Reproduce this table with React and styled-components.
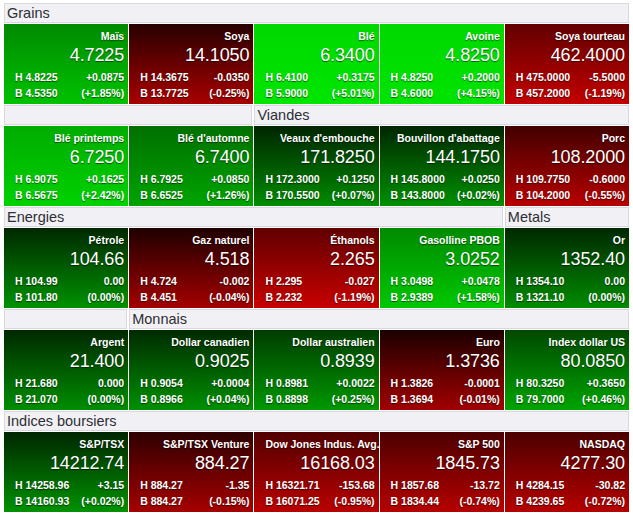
import React from "react";
import styled, { createGlobalStyle } from "styled-components";

const Global = createGlobalStyle`
  html, body { margin: 0; padding: 0; background: #ffffff; }
  body { font-family: "Liberation Sans", Arial, Helvetica, sans-serif; }
`;

const Board = styled.div`
  display: grid;
  grid-template-columns: repeat(5, 1fr);
  column-gap: 1px;
  row-gap: 1px;
  width: 625px;
  margin: 3px 0 0 4px;
`;

const SectionHeader = styled.div`
  grid-column: span ${(p) => p.$span};
  height: 18px;
  box-sizing: content-box;
  border: 1px solid #d8d8de;
  background: #f1f1f5;
  color: #2e2e33;
  font-size: 14.5px;
  line-height: 18px;
  padding-left: 2px;
  margin-right: ${(p) => (p.$last ? 0 : 1)}px;
  white-space: nowrap;
`;

const Tile = styled.div`
  height: 80px;
  box-sizing: border-box;
  padding: 5px 4px 0 11px;
  background: linear-gradient(to bottom, ${(p) => p.$from}, ${(p) => p.$to});
  color: #ffffff;
  text-shadow: 0 1px 1px rgba(0, 0, 0, 0.55);
  display: flex;
  flex-direction: column;
  overflow: hidden;
`;

const Name = styled.div`
  font-size: 10.5px;
  font-weight: bold;
  line-height: 14px;
  text-align: right;
  white-space: nowrap;
`;

const Price = styled.div`
  font-size: 18px;
  line-height: 24px;
  text-align: right;
  letter-spacing: -0.1px;
`;

const Stats = styled.div`
  margin-top: 3px;
  display: grid;
  grid-template-columns: 1fr auto;
  font-size: 10.5px;
  font-weight: bold;
  line-height: 15.5px;
  white-space: nowrap;
`;

const StatRight = styled.span`
  text-align: right;
`;

const sections = [
  {
    headers: [{ label: "Grains", span: 5 }],
    tiles: [
      ["Maïs", "4.7225", "4.8225", "4.5350", "+0.0875", "(+1.85%)", "#008a00", "#00c200"],
      ["Soya", "14.1050", "14.3675", "13.7725", "-0.0350", "(-0.25%)", "#280000", "#a80000"],
      ["Blé", "6.3400", "6.4100", "5.9000", "+0.3175", "(+5.01%)", "#00d800", "#00e600"],
      ["Avoine", "4.8250", "4.8250", "4.6000", "+0.2000", "(+4.15%)", "#00d800", "#00e400"],
      ["Soya tourteau", "462.4000", "475.0000", "457.2000", "-5.5000", "(-1.19%)", "#620000", "#c40000"],
    ],
  },
  {
    headers: [
      { label: "", span: 2 },
      { label: "Viandes", span: 3 },
    ],
    tiles: [
      ["Blé printemps", "6.7250", "6.9075", "6.5675", "+0.1625", "(+2.42%)", "#00ac00", "#00d200"],
      ["Blé d'automne", "6.7400", "6.7925", "6.6525", "+0.0850", "(+1.26%)", "#007000", "#00a400"],
      ["Veaux d'embouche", "171.8250", "172.3000", "170.5500", "+0.1250", "(+0.07%)", "#002400", "#008c00"],
      ["Bouvillon d'abattage", "144.1750", "145.8000", "143.8000", "+0.0250", "(+0.02%)", "#002600", "#009000"],
      ["Porc", "108.2000", "109.7750", "104.2000", "-0.6000", "(-0.55%)", "#420000", "#b80000"],
    ],
  },
  {
    headers: [
      { label: "Energies", span: 4 },
      { label: "Metals", span: 1 },
    ],
    tiles: [
      ["Pétrole", "104.66", "104.99", "101.80", "0.00", "(0.00%)", "#002800", "#009200"],
      ["Gaz naturel", "4.518", "4.724", "4.451", "-0.002", "(-0.04%)", "#200000", "#a40000"],
      ["Éthanols", "2.265", "2.295", "2.232", "-0.027", "(-1.19%)", "#620000", "#c80000"],
      ["Gasolline PBOB", "3.0252", "3.0498", "2.9389", "+0.0478", "(+1.58%)", "#008a00", "#00c800"],
      ["Or", "1352.40", "1354.10", "1321.10", "0.00", "(0.00%)", "#002800", "#008c00"],
    ],
  },
  {
    headers: [
      { label: "", span: 1 },
      { label: "Monnais", span: 4 },
    ],
    tiles: [
      ["Argent", "21.400", "21.680", "21.070", "0.000", "(0.00%)", "#002800", "#008e00"],
      ["Dollar canadien", "0.9025", "0.9054", "0.8966", "+0.0004", "(+0.04%)", "#002a00", "#009000"],
      ["Dollar australien", "0.8939", "0.8981", "0.8898", "+0.0022", "(+0.25%)", "#003c00", "#009800"],
      ["Euro", "1.3736", "1.3826", "1.3694", "-0.0001", "(-0.01%)", "#1c0000", "#a20000"],
      ["Index dollar US", "80.0850", "80.3250", "79.7000", "+0.3650", "(+0.46%)", "#004800", "#00a400"],
    ],
  },
  {
    headers: [{ label: "Indices boursiers", span: 5 }],
    tiles: [
      ["S&P/TSX", "14212.74", "14258.96", "14160.93", "+3.15", "(+0.02%)", "#002600", "#009200"],
      ["S&P/TSX Venture", "884.27", "884.27", "884.27", "-1.35", "(-0.15%)", "#2e0000", "#a60000"],
      ["Dow Jones Indus. Avg.", "16168.03", "16321.71", "16071.25", "-153.68", "(-0.95%)", "#520000", "#ba0000"],
      ["S&P 500", "1845.73", "1857.68", "1834.44", "-13.72", "(-0.74%)", "#4c0000", "#b60000"],
      ["NASDAQ", "4277.30", "4284.15", "4239.65", "-30.82", "(-0.72%)", "#4c0000", "#b60000"],
    ],
  },
];

function QuoteTile({ t }) {
  const [name, price, high, low, change, pct, from, to] = t;
  return (
    <Tile $from={from} $to={to}>
      <Name>{name}</Name>
      <Price>{price}</Price>
      <Stats>
        <span>H {high}</span>
        <StatRight>{change}</StatRight>
        <span>B {low}</span>
        <StatRight>{pct}</StatRight>
      </Stats>
    </Tile>
  );
}

export default function App() {
  return (
    <>
      <Global />
      <Board>
        {sections.map((s, si) => (
          <React.Fragment key={si}>
            {s.headers.map((h, hi) => (
              <SectionHeader key={"h" + hi} $span={h.span} $last={hi === s.headers.length - 1}>
                {h.label}
              </SectionHeader>
            ))}
            {s.tiles.map((t) => (
              <QuoteTile key={t[0]} t={t} />
            ))}
          </React.Fragment>
        ))}
      </Board>
    </>
  );
}
